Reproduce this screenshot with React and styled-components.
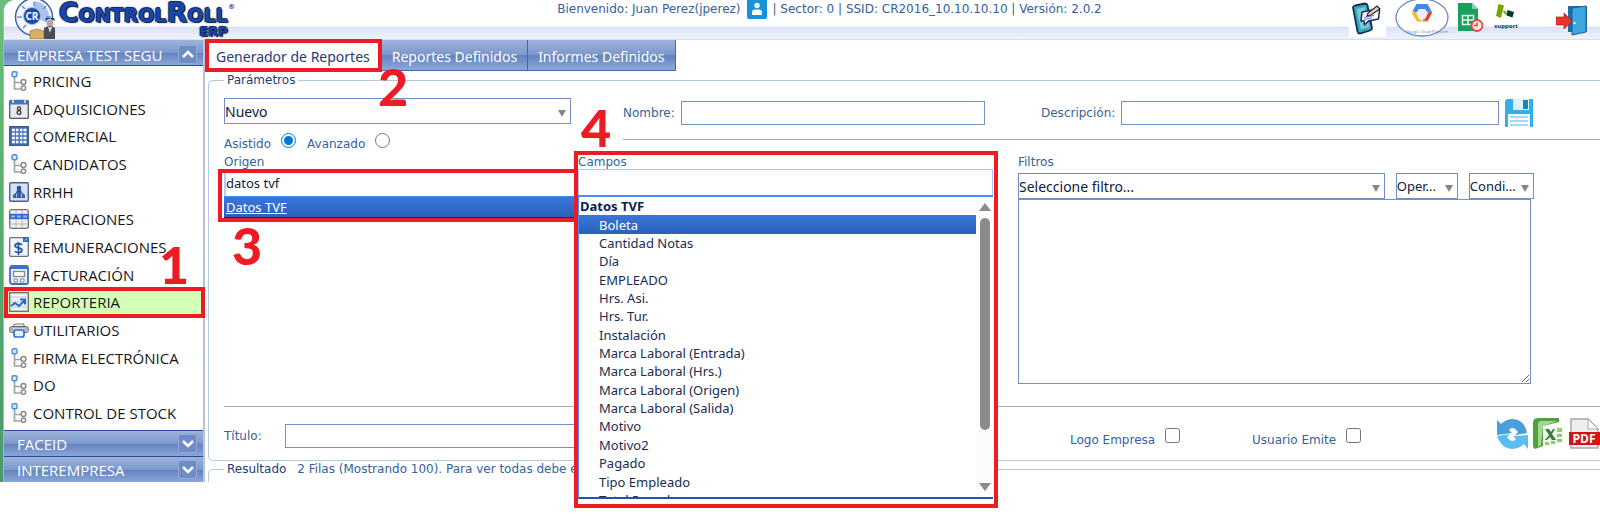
import React, { useState } from "react";
import styled, { createGlobalStyle } from "styled-components";

const GlobalStyle = createGlobalStyle`
  * {
    box-sizing: border-box;
  }

  body {
    margin: 0;
    min-height: 100vh;
    background: #fff;
    font-family: "DejaVu Sans", Verdana, sans-serif;
    font-size: 12px;
    color: #34629e;
  }

  input,
  select,
  textarea,
  button {
    font-family: "Noto Sans", "Open Sans", sans-serif;
    font-size: 14px;
    color: #0b1c3f;
  }
`;

const Page = styled.div`
  padding-left: 3px;
  background: linear-gradient(#67bf78, #4a9968) no-repeat left top / 24px 100%;
`;

const Shell = styled.div`
  background: #fff;
  border-left: 1px solid #a3b1dc;
  border-top-left-radius: 12px;
`;

const Header = styled.header`
  display: flex;
  justify-content: space-between;
  height: 40px;
  padding: 0 12px 0 10px;
  border-top-left-radius: 12px;
  border-bottom: 1px solid #d6ddec;
  background: linear-gradient(#fff 0 26px, #dce2f5 27px, #f0f3fb 39px);
`;

const Brand = styled.div`
  display: flex;
  flex: 544 0 0;
`;

const BrandText = styled.div`
  position: relative;
  padding-left: 4px;
  color: #1746ae;
  font-size: 27px;
  font-weight: bold;
  font-variant: small-caps;
  line-height: 26px;
  text-shadow: 1px 1px 1px #0a1536, -1px 0 1px #0a1536, 0 -1px 1px #0a1536;

  sup {
    position: absolute;
    top: 3px;
    left: 100%;
    font-size: 7px;
    line-height: 8px;
    text-shadow: none;
  }

  small {
    position: absolute;
    top: 26px;
    right: 0;
    font-size: 13px;
    font-variant: normal;
    line-height: 12px;
  }
`;

const Welcome = styled.div`
  display: flex;
  align-items: flex-start;
  gap: 6px;
  line-height: 18px;
  white-space: nowrap;
`;

const Shortcuts = styled.nav`
  display: flex;
  flex: 487 0 0;
  justify-content: flex-end;
  gap: 9px;
`;

const ShortcutLink = styled.a`
  display: block;
  height: 38px;
  margin-left: ${(props) => (props.$apart ? "28px" : "0")};
`;

const Workspace = styled.div`
  display: flex;
  min-height: 441px;
`;

const Sidebar = styled.aside`
  display: flex;
  flex-direction: column;
  flex: none;
  width: 201px;
  border-right: 2px solid #b9c3dd;
`;

const PanelTitle = styled.div`
  display: flex;
  align-items: center;
  justify-content: space-between;
  height: 26px;
  padding: ${(props) => (props.$open ? "4px 6px 0 13px" : "0 6px 0 13px")};
  border-top: ${(props) => (props.$open ? "none" : "1px solid #2a4a9c")};
  border-bottom: ${(props) => (props.$open ? "1px solid #2a4a9c" : "none")};
  background: linear-gradient(#9db3dc, #7e98cd 50%, #6482bd 52%, #8aa7da);
  color: #fff;
  font-family: "Open Sans", "Noto Sans", sans-serif;
  font-size: 15px;
`;

const ToggleButton = styled.button`
  display: flex;
  align-items: center;
  justify-content: center;
  width: 19px;
  height: 19px;
  padding: 0;
  border: 1px solid #93a9d8;
  border-radius: 3px;
  background: #6f8cc6;
  color: #fff;
`;

const Menu = styled.ul`
  display: flex;
  flex: 1;
  flex-direction: column;
  margin: 0;
  padding: 1px 0 3px;
  list-style: none;
`;

const MenuItem = styled.li`
  position: relative;
  display: flex;
  flex: 1;
  background: ${(props) => (props.$active ? "#d3ffb9" : "none")};

  a {
    display: flex;
    flex: 1;
    align-items: center;
    gap: 4px;
    padding-left: 5px;
    color: #16181c;
    font-family: "Open Sans", "Noto Sans", sans-serif;
    font-size: 15px;
    text-decoration: none;
    white-space: nowrap;
  }
`;

const Highlight = styled.div`
  position: absolute;
  inset: ${(props) => props.$inset};
  z-index: 3;
  border: 4px solid #ed1c24;
  pointer-events: none;
`;

const Step = styled.span`
  position: absolute;
  top: ${(props) => props.$top};
  left: ${(props) => props.$left};
  z-index: 4;
  color: #ed1c24;
  font-family: Lato, "Open Sans", sans-serif;
  font-size: 52px;
  font-weight: 900;
  line-height: 40px;
`;

const Main = styled.main`
  flex: 1;
  min-width: 0;
`;

const Tabs = styled.nav`
  display: flex;
  height: 31px;
`;

const Tab = styled.a`
  position: relative;
  display: flex;
  align-items: center;
  padding: 2px 10px 0;
  border-right: 1px solid #4766a8;
  border-bottom: 1px solid #4766a8;
  background: linear-gradient(#9db3dc, #7e98cd 48%, #6482bd 52%, #8aaadd);
  color: #fff;
  font-family: "Noto Sans", "Open Sans", sans-serif;
  font-size: 14px;
  text-decoration: none;
  white-space: nowrap;

  ${(props) =>
    props.$active &&
    `
    padding: 2px 11px 0;
    border-color: transparent;
    background: #fff;
    color: #27397c;
  `}
`;

const Fieldset = styled.fieldset`
  min-width: 0;
  margin: ${(props) => (props.$open ? "1px 0 0 3px" : "2px 0 0 3px")};
  padding: 0 0 0 15px;
  border: 1px solid #b4c8de;
  border-right: 0;
  border-bottom-width: ${(props) => (props.$open ? "0" : "1px")};
  border-radius: ${(props) => (props.$open ? "5px 0 0 0" : "5px 0 0 5px")};
`;

const Legend = styled.legend`
  padding: 0 3px;
  color: #1d3b73;
  line-height: 15px;

  span {
    margin-left: 7px;
    color: #34629e;
  }
`;

const Setup = styled.div`
  display: grid;
  grid-template-columns: 347fr 977fr;
  column-gap: 52px;
  padding-top: 10px;
`;

const SelectBox = styled.div`
  position: relative;

  select {
    display: block;
    width: 100%;
    height: 26px;
    padding: ${(props) => (props.$compact ? "0 8px 0 0" : "0 20px 0 0")};
    border: 1px solid #6f90c6;
    border-radius: 0;
    background: #fff;
    appearance: none;
    font-size: ${(props) => (props.$compact ? "13px" : "14px")};
  }

  &::after {
    content: "";
    position: absolute;
    top: 12px;
    right: 5px;
    border: 4px solid transparent;
    border-top: 7px solid #868686;
    border-bottom: 0;
    pointer-events: none;
  }
`;

const ModeRow = styled.div`
  display: flex;
  align-items: flex-end;
  height: 27px;

  label {
    line-height: 14px;
  }

  input {
    width: 15px;
    height: 15px;
    margin: 0 11px 3px 10px;
    accent-color: #0078d7;
  }
`;

const NameRow = styled.div`
  display: grid;
  grid-template-columns: 362fr 508fr 95fr;
  column-gap: 6px;
  align-items: center;
  padding-top: 1px;
`;

const Field = styled.div`
  display: flex;
  align-items: center;
  gap: 6px;
  padding-left: ${(props) => (props.$shifted ? "50px" : "0")};
`;

const TitleField = styled(Field)`
  padding: 5px 100px 0 0;

  label {
    min-width: 55px;
  }
`;

const TextInput = styled.input`
  flex: 1;
  min-width: 0;
  height: 24px;
  padding: 0 2px;
  border: 1px solid #7292c8;
`;

const Rule = styled.hr`
  height: 1px;
  margin: ${(props) => props.$margin};
  border: 0;
  background: #a9a9a9;
`;

const IconButton = styled.button`
  display: block;
  justify-self: start;
  padding: 0;
  border: 0;
  background: none;
  line-height: 0;
`;

const Columns = styled.div`
  display: grid;
  grid-template-columns: 354fr 440fr 516fr 66fr;
  margin-top: 4px;
`;

const Column = styled.section`
  position: relative;
  min-width: 0;
`;

const ColumnLabel = styled.label`
  display: block;
  height: 14px;
  line-height: 14px;
`;

const OriginPicker = styled.div`
  position: relative;

  input {
    display: block;
    width: 100%;
    height: 27px;
    padding: 0;
    border: 0;
    border-left: 2px solid #b9cdf5;
    outline: 0;
    font-size: 13px;
  }

  a {
    display: block;
    height: 22px;
    padding-left: 2px;
    border-top: 1px solid #4a8cf5;
    border-bottom: 1px solid #0d2a6c;
    background: linear-gradient(#3a77dc, #2a60b8);
    color: #fff;
    font-family: "Noto Sans", "Open Sans", sans-serif;
    font-size: 13px;
    line-height: 20px;
  }
`;

const FieldsPopup = styled.div`
  position: absolute;
  top: 0;
  left: 0;
  right: 24px;
  z-index: 2;
  height: 349px;
  padding-right: 1px;
  background: #fff;

  input {
    display: block;
    width: 100%;
    height: 26px;
    border: 1px solid #a9c4f7;
    border-bottom: 0;
    outline: 0;
  }
`;

const ListFrame = styled.div`
  display: flex;
  height: 304px;
  border-top: 2px solid #4a8cf5;
  border-left: 1px solid #4a8cf5;
  border-bottom: 2px solid #1c55b5;
  overflow: hidden;
`;

const OptionList = styled.ul`
  display: flex;
  flex: 1;
  flex-direction: column;
  height: 312px;
  margin: 0;
  padding: 0;
  list-style: none;
  font-family: "Noto Sans", "Open Sans", sans-serif;
  font-size: 13px;
  color: #1a2b52;
`;

const Option = styled.li`
  display: flex;
  flex: 1;
  align-items: center;
  padding-left: ${(props) => (props.$group ? "1px" : "20px")};
  font-weight: ${(props) => (props.$group ? "bold" : "normal")};
  color: ${(props) => (props.$group ? "#0b1c52" : "inherit")};

  &[aria-selected="true"] {
    background: linear-gradient(#3a77dc, #2a60b8);
    color: #fff;
  }
`;

const ScrollTrack = styled.div`
  display: flex;
  flex-direction: column;
  align-items: center;
  width: 17px;
  padding: 6px 0;
  background: #fcfcfc;

  &::before,
  &::after {
    content: "";
    border: 6px solid transparent;
  }

  &::before {
    border-top: 0;
    border-bottom: 8px solid #8a8a8a;
  }

  &::after {
    margin-top: auto;
    border-bottom: 0;
    border-top: 8px solid #8a8a8a;
  }
`;

const ScrollThumb = styled.div`
  width: 10px;
  height: 212px;
  margin-top: 7px;
  border-radius: 5px;
  background: #8a8a8a;
`;

const FilterRow = styled.div`
  display: grid;
  grid-template-columns: 366fr 62fr 65fr;
  column-gap: 11px;
  margin-top: 4px;
`;

const FilterText = styled.textarea`
  display: block;
  width: calc(100% - 3px);
  height: 185px;
  border: 1px solid #7292c8;
`;

const OutputRow = styled.div`
  display: grid;
  grid-template-columns: 846fr 182fr 245fr 103fr;
  align-items: center;
  padding: 11px 0;
`;

const CheckField = styled.div`
  display: flex;
  align-items: center;
  gap: 10px;
  padding-top: 4px;

  label {
    padding-top: 8px;
  }

  input {
    width: 15px;
    height: 15px;
    margin: 0;
  }
`;

const Exports = styled.div`
  display: flex;
  gap: 5px;
`;

const ResultBody = styled.div`
  height: 5px;
`;

const TreeIcon = () => (
  <svg width="20" height="20" viewBox="0 0 20 20" fill="none">
    <path d="M5.500 6v12h7M5.500 11.500h7" stroke="#a3a3a3" strokeWidth="1.700" />
    <rect x="3" y="0.700" width="5" height="5" rx="1.500" fill="#d3e8ff" stroke="#4b8be4" strokeWidth="1.400" />
    <circle cx="14.500" cy="11" r="2.400" fill="#fafafa" stroke="#8a8a8a" strokeWidth="1.500" />
    <circle cx="14.500" cy="17.200" r="2.200" fill="#fafafa" stroke="#8a8a8a" strokeWidth="1.500" />
  </svg>
);

const CalendarIcon = () => (
  <svg width="20" height="20" viewBox="0 0 20 20">
    <rect x="0.700" y="1.500" width="18.600" height="18" rx="1" fill="#e9eaec" stroke="#555b66" strokeWidth="1.300" />
    <path d="M1 1h18v4.500H1z" fill="#3d75c9" />
    <path d="M4 0v4M16 0v4" stroke="#e3ecf8" strokeWidth="1.500" />
    <circle cx="10" cy="9.500" r="1.600" fill="none" stroke="#333" strokeWidth="1.200" />
    <circle cx="10" cy="13.500" r="1.900" fill="none" stroke="#333" strokeWidth="1.300" />
  </svg>
);

const BuildingIcon = () => (
  <svg width="20" height="20" viewBox="0 0 20 20">
    <rect x="0.700" y="0.700" width="18.600" height="18.600" fill="#4d76bb" stroke="#33548f" strokeWidth="1.300" />
    {[4, 8, 12, 16].map((y) => (
      <path key={y} d={`M3 ${y}h3M7 ${y}h2.500M11 ${y}h2.500M14.500 ${y}h3`} stroke="#f2f6fd" strokeWidth="2.600" />
    ))}
  </svg>
);

const PersonIcon = () => (
  <svg width="20" height="20" viewBox="0 0 20 20">
    <rect x="0.700" y="0.700" width="18.600" height="18.600" rx="1" fill="#d5e1f5" stroke="#4a6496" strokeWidth="1.400" />
    <circle cx="10" cy="6" r="2.300" fill="#2d4f93" />
    <path d="M8 8h4l1 3h-6z" fill="#2d4f93" />
    <path d="M4 16v-3l3-2.500h6l3 2.500v3z" fill="#3b60a8" />
    <path d="M7.500 11.500v4M12.500 11.500v4" stroke="#a9c3ee" />
  </svg>
);

const TableIcon = () => (
  <svg width="20" height="20" viewBox="0 0 20 20">
    <rect x="0.700" y="0.700" width="18.600" height="18.600" rx="2" fill="#f1f1f1" stroke="#707070" strokeWidth="1.300" />
    <path d="M1 5h18M1 10h18M1 15h18M7 1v18M13 1v18" stroke="#b5b5b5" />
    <path d="M0 5h20v5H0z" fill="#2c6bcc" />
    <path d="M2 7.500h4M8 7.500h4M14 7.500h4" stroke="#8fb8f2" strokeWidth="2" />
  </svg>
);

const PayrollIcon = () => (
  <svg width="20" height="20" viewBox="0 0 20 20">
    <rect x="0.700" y="0.700" width="18.600" height="18.600" rx="1" fill="#f4f6fa" stroke="#6c7280" strokeWidth="1.300" />
    <path d="M14 0h6v5h-6z" fill="#2f6bc4" />
    <path d="M16 3.500l2-2" stroke="#fff" />
    <path d="M13 8c-1-2-7-2-7 .800s7 1.500 7 4.400-6 3-7 .800M9.500 5v13" fill="none" stroke="#1f57ad" strokeWidth="1.700" />
  </svg>
);

const InvoiceIcon = () => (
  <svg width="20" height="20" viewBox="0 0 20 20">
    <rect x="1" y="1" width="18" height="18" rx="2" fill="#e6eefb" stroke="#3a72c9" strokeWidth="1.800" />
    <path d="M1 3h18" stroke="#3a72c9" strokeWidth="2" />
    <rect x="4.500" y="6.500" width="11" height="5" fill="#fff" stroke="#888" strokeWidth="1.300" />
    <path d="M5 14h3.500v3H5zM11.500 14h3.500v3h-3.500z" fill="#fff" stroke="#888" />
  </svg>
);

const ChartIcon = () => (
  <svg width="20" height="20" viewBox="0 0 20 20" fill="none">
    <rect x="0.700" y="0.700" width="18.600" height="18.600" fill="#eef1f5" stroke="#6b6b6b" strokeWidth="1.300" />
    <path d="M1 5h18M1 10h18M1 15h18" stroke="#c6cbd2" />
    <path d="M2 14l4-3 4 3 5-5M11 7.500h5v5" stroke="#2869c4" strokeWidth="2" />
  </svg>
);

const PrinterIcon = () => (
  <svg width="20" height="20" viewBox="0 0 20 20">
    <path d="M5 4h10v3H5z" fill="#f2f2f2" stroke="#777" />
    <rect x="0.700" y="6.500" width="18.600" height="6" rx="2" fill="#c4c4c4" stroke="#666" />
    <path d="M3 8h14v2H3z" fill="#f2f2f2" stroke="#888" strokeWidth=".7" />
    <rect x="5" y="10" width="10" height="7" rx="2" fill="#e4efff" stroke="#2f6fd6" strokeWidth="1.700" />
  </svg>
);

const LogoIcon = () => (
  <svg width="41" height="39" viewBox="0 0 41 39">
    <circle cx="20" cy="17" r="18.500" fill="#f4f7fc" stroke="#3c63b4" strokeWidth="1.500" />
    <path d="M20 17V1a16 16 0 0 1 14 22z" fill="#a9c3ee" />
    <path d="M20 2v4M3 17h5M32 17h5M8 6l3 3M32 6l-3 3M9 28l3-3" stroke="#6f8fcb" strokeWidth="1.500" />
    <circle cx="18" cy="16" r="8.500" fill="#1d49ab" stroke="#9db8e8" />
    <text x="18" y="20" fill="#fff" fontFamily="Open Sans" fontSize="10" fontWeight="bold" textAnchor="middle">CR</text>
    <path d="M16 31l7-2 7 2v8H16z" fill="#d8ae62" stroke="#8c6a2c" strokeWidth=".6" />
    <circle cx="36" cy="23" r="3.500" fill="#b9a79a" />
    <path d="M31 21q5-5 10 0l-1-3h-8z" fill="#222e46" />
    <path d="M30 28q6-4 11 0v11H30z" fill="#4a4d55" />
    <path d="M34 27l2 6 2-6z" fill="#ddd" />
  </svg>
);

const UserIcon = () => (
  <svg width="20" height="19" viewBox="0 0 20 19">
    <path d="M0 0h20v17a2 2 0 0 1-2 2H2a2 2 0 0 1-2-2z" fill="#1791dc" />
    <circle cx="10" cy="5.500" r="2.700" fill="#fff" />
    <path d="M5 15v-2.500q0-3 3-3h4q3 0 3 3V15z" fill="#fff" />
  </svg>
);

const SignPhoneIcon = () => (
  <svg width="37" height="37" viewBox="0 0 37 37">
    <path d="M0 0h37v37H0z" fill="#fff" />
    <path d="M4 7.500q0-1.500 2-2l10-2q2 0 2.500 2L23 28q0 2-2 2.500L11 33.500q-2 0-2.500-2z" fill="#35a9ba" stroke="#16285f" strokeWidth="1.800" />
    <path d="M7.500 9l8.500-2 4.500 20-8.500 2.500z" fill="#7accd3" />
    <path d="M13 12l16-3q1.500 0 1.500 1l-1 9-10 2-4 4-.500-4-3 0z" fill="#fdfdff" stroke="#16285f" strokeWidth="1.500" strokeLinejoin="round" />
    <path d="M15 17.500l10-2M15 19.500l8-1.500" stroke="#6d6fd0" strokeWidth="1.200" />
    <path d="M19 13l9-7 3 3-9 6-4 1z" fill="#f2c98a" stroke="#16285f" strokeWidth="1.200" />
  </svg>
);

const CloudIcon = () => (
  <svg width="54" height="37" viewBox="0 0 54 37">
    <ellipse cx="27" cy="17.500" rx="26" ry="18.500" fill="#fff" stroke="#6c8ac4" strokeWidth="1.300" />
    <path d="M21.500 4h11l4 7-4 2-3-4h-5l-3 4-4-2z" fill="#4387f0" />
    <path d="M36.500 11l.500 2-4.500 8.500-5-.500 5-8z" fill="#dc4437" />
    <path d="M17.500 11l4 1.500 4.500 8h6l.500 1H22l-5-8z" fill="#f5bd1c" />
    <path d="M24 9h6l3 4-3 6h-6l-3-6z" fill="#e8edf6" />
    <text x="11" y="33" fontFamily="Open Sans" fontSize="4" fill="#4387f0">Google<tspan fill="#777"> Cloud Platform</tspan></text>
  </svg>
);

const SheetIcon = () => (
  <svg width="26" height="33" viewBox="0 0 26 33">
    <path d="M0 3h14l6 6v22H0z" fill="#17a05e" />
    <path d="M14 3l6 6h-6z" fill="#8bd0ae" />
    <path d="M4.500 15.500h11v9h-11zM10 15v10M4 20h12" fill="none" stroke="#e6f5ee" strokeWidth="1.500" />
    <circle cx="19" cy="25.500" r="5.500" fill="#fbe4e2" stroke="#df4a42" strokeWidth="1.800" />
    <path d="M19 22.500v3h-3" fill="none" stroke="#df4a42" strokeWidth="1.500" />
  </svg>
);

const SupportIcon = () => (
  <svg width="26" height="30" viewBox="0 0 26 30">
    <path d="M5.500 4l5.500 1.500-3 12.500-5-2z" fill="#78a300" />
    <path d="M14.500 10l6.500 2-1.500 5.500-6-2z" fill="#03363d" />
    <path d="M10.500 11l3 3" stroke="#78a300" strokeWidth="2" />
    <text x="13" y="28" fontFamily="Open Sans" fontSize="6" fontWeight="bold" fill="#14363b" textAnchor="middle">support</text>
  </svg>
);

const ExitIcon = () => (
  <svg width="32" height="36" viewBox="0 0 32 36">
    <path d="M12 6h19v26H12z" fill="#1d6fa3" />
    <path d="M16 8l14-2v26l-14 3z" fill="#3fa7e0" stroke="#1b6394" />
    <circle cx="18.500" cy="23" r="1.200" fill="#dff1ff" />
    <path d="M0 17h8v-4l8 8-8 8v-4H0z" fill="#e8352b" stroke="#b21d18" strokeWidth=".7" />
  </svg>
);

const SaveIcon = () => (
  <svg width="28" height="28" viewBox="0 0 28 28">
    <path d="M2 0h26v28H0V2z" fill="#35ade8" />
    <path d="M8 0h16v11H8z" fill="#dff0fa" />
    <path d="M18 1h5v9h-5z" fill="#1486b8" />
    <path d="M3 15h22v13H3z" fill="#f7fcff" />
    <path d="M5 18h18M5 22h18M5 26h18" stroke="#8fd0ee" strokeWidth="1.500" />
  </svg>
);

const RefreshIcon = () => (
  <svg width="31" height="30" viewBox="0 0 31 30">
    <path d="M0 1l4 4q9-8 19-3 6 4 7 12l-12 2 3-3q-5-7-9-2l3 3-15 2z" fill="#4a9edb" />
    <path d="M31 30l-4-5q-9 8-19 3-6-4-8-11l13-2-3 3q5 7 9 2l-3-3 15-1z" fill="#59bdee" />
  </svg>
);

const ExcelIcon = () => (
  <svg width="31" height="31" viewBox="0 0 31 31">
    <path d="M0 5q0-5 5-5h21v4l-16 4v20l-8 3q-2-1-2-3z" fill="#4ea33a" />
    <path d="M5 5q1-2 4-2h15l-14 5-2 19-3 2z" fill="#a6d890" />
    <path d="M10 8h20v17l-20 4z" fill="#f4fbf0" />
    <path d="M24 10h5v4h-5zM24 16h5v3h-5zM24 21h5v3h-5zM18 23h4v3h-4zM12 24h4v3h-4z" fill="#8fcb6f" />
    <path d="M12 11h4l2 3 2-3h2l-3 5 4 6h-4l-2-3-3 3h-2l4-5z" fill="#3c7a35" />
  </svg>
);

const PdfIcon = () => (
  <svg width="31" height="31" viewBox="0 0 31 31">
    <path d="M2 1h17l10 10v19H2z" fill="#eee" stroke="#a8a8a8" strokeWidth="1.500" />
    <path d="M19 1v10h10z" fill="#fff" stroke="#a8a8a8" />
    <path d="M0 14h31v13H0z" fill="#d31414" />
    <text x="15" y="25" fontFamily="Open Sans" fontSize="12" fontWeight="bold" fill="#fff" textAnchor="middle">PDF</text>
  </svg>
);

const Chevron = ({ up }) => (
  <svg width="12" height="9" viewBox="0 0 12 9" fill="none">
    <path d={up ? "M1 7l5-5 5 5" : "M1 2l5 5 5-5"} stroke="#fff" strokeWidth="2.500" />
  </svg>
);

const menu = [
  { label: "PRICING", Icon: TreeIcon },
  { label: "ADQUISICIONES", Icon: CalendarIcon },
  { label: "COMERCIAL", Icon: BuildingIcon },
  { label: "CANDIDATOS", Icon: TreeIcon },
  { label: "RRHH", Icon: PersonIcon },
  { label: "OPERACIONES", Icon: TableIcon },
  { label: "REMUNERACIONES", Icon: PayrollIcon },
  { label: "FACTURACIÓN", Icon: InvoiceIcon },
  { label: "REPORTERIA", Icon: ChartIcon, active: true },
  { label: "UTILITARIOS", Icon: PrinterIcon },
  { label: "FIRMA ELECTRÓNICA", Icon: TreeIcon },
  { label: "DO", Icon: TreeIcon },
  { label: "CONTROL DE STOCK", Icon: TreeIcon },
];

const fields = [
  "Boleta",
  "Cantidad Notas",
  "Día",
  "EMPLEADO",
  "Hrs. Asi.",
  "Hrs. Tur.",
  "Instalación",
  "Marca Laboral (Entrada)",
  "Marca Laboral (Hrs.)",
  "Marca Laboral (Origen)",
  "Marca Laboral (Salida)",
  "Motivo",
  "Motivo2",
  "Pagado",
  "Tipo Empleado",
  "Total Pagado",
];

const TopBar = () => (
  <Header>
    <Brand>
      <LogoIcon />
      <div>
        <BrandText>
          ControlRoll<sup>®</sup>
          <small>ERP</small>
        </BrandText>
      </div>
    </Brand>
    <Welcome>
      <span>Bienvenido: Juan Perez(jperez)</span>
      <UserIcon />
      <span>| Sector: 0 | SSID: CR2016_10.10.10.10 | Versión: 2.0.2</span>
    </Welcome>
    <Shortcuts>
      <ShortcutLink href="#firma" aria-label="Firma"><SignPhoneIcon /></ShortcutLink>
      <ShortcutLink href="#cloud" aria-label="Cloud"><CloudIcon /></ShortcutLink>
      <ShortcutLink href="#planilla" aria-label="Planilla"><SheetIcon /></ShortcutLink>
      <ShortcutLink href="#support" aria-label="Support"><SupportIcon /></ShortcutLink>
      <ShortcutLink href="#salir" aria-label="Salir" $apart><ExitIcon /></ShortcutLink>
    </Shortcuts>
  </Header>
);

const SideMenu = () => (
  <Sidebar>
    <PanelTitle $open>
      EMPRESA TEST SEGU
      <ToggleButton aria-label="Contraer"><Chevron up /></ToggleButton>
    </PanelTitle>
    <Menu>
      {menu.map(({ label, Icon, active }) => (
        <MenuItem key={label} $active={active}>
          <a href="#menu">
            <Icon />
            {label}
          </a>
          {active && <Highlight $inset="-2px -2px -2px 0" />}
          {active && <Step $top="-45px" $left="155px">1</Step>}
        </MenuItem>
      ))}
    </Menu>
    {["FACEID", "INTEREMPRESA"].map((name) => (
      <PanelTitle key={name}>
        {name}
        <ToggleButton aria-label="Expandir"><Chevron /></ToggleButton>
      </PanelTitle>
    ))}
  </Sidebar>
);

const FieldPicker = () => {
  const [selected, setSelected] = useState("Boleta");
  return (
    <FieldsPopup>
      <ColumnLabel htmlFor="campos">Campos</ColumnLabel>
      <input id="campos" />
      <ListFrame>
        <OptionList role="listbox" aria-label="Campos">
          <Option role="presentation" $group>Datos TVF</Option>
          {fields.map((field) => (
            <Option key={field} role="option" aria-selected={field === selected} onClick={() => setSelected(field)}>
              {field}
            </Option>
          ))}
        </OptionList>
        <ScrollTrack>
          <ScrollThumb />
        </ScrollTrack>
      </ListFrame>
      <Highlight $inset="-4px" />
    </FieldsPopup>
  );
};

const App = () => {
  return (
    <Page>
      <GlobalStyle />
      <Shell>
        <TopBar />
        <Workspace>
          <SideMenu />
          <Main>
            <Tabs>
              <Tab href="#generador" $active>
                Generador de Reportes
                <Highlight $inset="-1px -1px -2px 0" />
                <Step $top="26px" $left="173px">2</Step>
              </Tab>
              <Tab href="#reportes">Reportes Definidos</Tab>
              <Tab href="#informes">Informes Definidos</Tab>
            </Tabs>
            <Fieldset>
              <Legend>Parámetros</Legend>
              <Setup>
                <div>
                  <SelectBox>
                    <select aria-label="Reporte">
                      <option>Nuevo</option>
                    </select>
                  </SelectBox>
                  <ModeRow>
                    <label htmlFor="asistido">Asistido</label>
                    <input type="radio" id="asistido" name="modo" defaultChecked />
                    <label htmlFor="avanzado">Avanzado</label>
                    <input type="radio" id="avanzado" name="modo" />
                  </ModeRow>
                </div>
                <div>
                  <NameRow>
                    <Field>
                      <label htmlFor="nombre">Nombre:</label>
                      <TextInput id="nombre" />
                    </Field>
                    <Field $shifted>
                      <label htmlFor="descripcion">Descripción:</label>
                      <TextInput id="descripcion" />
                    </Field>
                    <IconButton aria-label="Guardar"><SaveIcon /></IconButton>
                  </NameRow>
                  <Rule $margin="12px 0 0" />
                </div>
              </Setup>
              <Columns>
                <Column>
                  <ColumnLabel htmlFor="origen">Origen</ColumnLabel>
                  <OriginPicker>
                    <input id="origen" defaultValue="datos tvf" />
                    <a href="#datos-tvf">Datos TVF</a>
                    <Highlight $inset="0 0 -4px -6px" />
                    <Step $top="56px" $left="8px">3</Step>
                  </OriginPicker>
                </Column>
                <Column>
                  <FieldPicker />
                  <Step $top="-48px" $left="3px">4</Step>
                </Column>
                <Column>
                  <ColumnLabel htmlFor="filtros">Filtros</ColumnLabel>
                  <FilterRow>
                    <SelectBox>
                      <select id="filtros">
                        <option>Seleccione filtro...</option>
                      </select>
                    </SelectBox>
                    <SelectBox $compact>
                      <select aria-label="Operador">
                        <option>Oper...</option>
                      </select>
                    </SelectBox>
                    <SelectBox $compact>
                      <select aria-label="Condición">
                        <option>Condi...</option>
                      </select>
                    </SelectBox>
                  </FilterRow>
                  <FilterText aria-label="Filtros aplicados" />
                </Column>
              </Columns>
              <Rule $margin="22px 0 0" />
              <OutputRow>
                <TitleField>
                  <label htmlFor="titulo">Título:</label>
                  <TextInput id="titulo" />
                </TitleField>
                <CheckField>
                  <label htmlFor="logo">Logo Empresa</label>
                  <input type="checkbox" id="logo" />
                </CheckField>
                <CheckField>
                  <label htmlFor="usuario">Usuario Emite</label>
                  <input type="checkbox" id="usuario" />
                </CheckField>
                <Exports>
                  <IconButton aria-label="Actualizar"><RefreshIcon /></IconButton>
                  <IconButton aria-label="Excel"><ExcelIcon /></IconButton>
                  <IconButton aria-label="PDF"><PdfIcon /></IconButton>
                </Exports>
              </OutputRow>
            </Fieldset>
            <Fieldset $open>
              <Legend>
                Resultado <span>2 Filas (Mostrando 100). Para ver todas debe e</span>
              </Legend>
              <ResultBody />
            </Fieldset>
          </Main>
        </Workspace>
      </Shell>
    </Page>
  );
};

export default App;
